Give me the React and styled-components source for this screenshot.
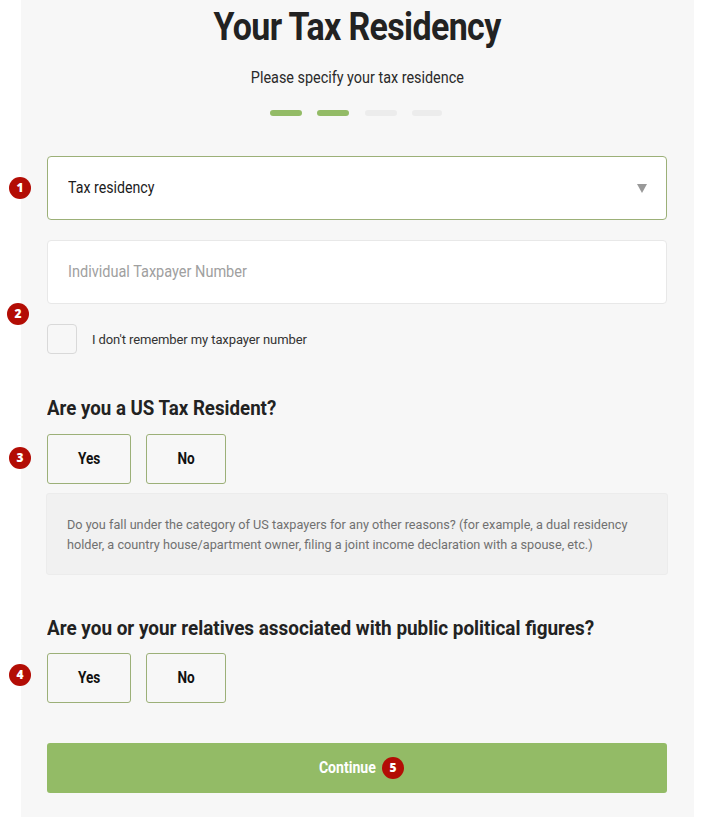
import React from "react";
import styled, { createGlobalStyle } from "styled-components";

const Global = createGlobalStyle`
  html, body {
    margin: 0;
    padding: 0;
    background: #fff;
    font-family: "Roboto", "Liberation Sans", sans-serif;
    color: #222;
  }
`;

const Page = styled.div`
  width: 720px;
  height: 836px;
  position: relative;
  overflow: hidden;
`;

const Panel = styled.div`
  position: relative;
  margin-left: 21px;
  width: 673px;
  height: 817px;
  box-sizing: border-box;
  padding: 0 27px 0 26px;
  background: #f7f7f7;
  display: flex;
  flex-direction: column;
`;

// the reference face is a condensed grotesque, Roboto gets squeezed to match
const Narrow = styled.span`
  display: inline-block;
  transform: scaleX(${(p) => p.$x || 0.9});
  transform-origin: ${(p) => p.$origin || "left"} center;
  white-space: nowrap;
`;

const Title = styled.h1`
  margin: 5px 0 0;
  height: 44px;
  line-height: 44px;
  font-size: 39px;
  font-weight: 700;
  letter-spacing: -0.7px;
  text-align: center;
  color: #222;
`;

const Subtitle = styled.p`
  margin: 19px 0 0;
  height: 20px;
  line-height: 20px;
  font-size: 16px;
  text-align: center;
  color: #2a2a2a;
`;

const Steps = styled.div`
  margin: 22px 3px 0 0;
  display: flex;
  justify-content: center;
`;

const Step = styled.span`
  width: ${(p) => p.$w || 32}px;
  height: 6px;
  margin-left: ${(p) => p.$gap || 0}px;
  border-radius: 3px;
  background: ${(p) => (p.$on ? "#93bb66" : "#ececec")};
`;

const Select = styled.div`
  margin-top: 40px;
  height: 64px;
  box-sizing: border-box;
  padding: 0 20px 2px;
  background: #fff;
  border: 1px solid #9cb078;
  border-radius: 4px;
  display: flex;
  align-items: center;
  justify-content: space-between;
  font-size: 16px;
  color: #1c1c1c;
`;

const Caret = styled.span`
  width: 0;
  height: 0;
  margin: 2px -1px 0 0;
  border-left: 5.5px solid transparent;
  border-right: 5.5px solid transparent;
  border-top: 9px solid #999;
`;

const Input = styled.div`
  margin-top: 20px;
  height: 64px;
  box-sizing: border-box;
  padding: 0 20px 2px;
  background: #fff;
  border: 1px solid #e8e8e8;
  border-radius: 4px;
  display: flex;
  align-items: center;
  font-size: 16px;
  color: #a0a0a0;
`;

const CheckRow = styled.label`
  margin-top: 20px;
  display: flex;
  align-items: center;
  gap: 15px;
  font-size: 13px;
  letter-spacing: -0.1px;
  color: #333;
`;

const Check = styled.span`
  width: 30px;
  height: 30px;
  box-sizing: border-box;
  background: #f7f7f7;
  border: 1px solid #d9d9d9;
  border-radius: 4px;
`;

const Question = styled.h2`
  margin: ${(p) => p.$top}px 0 0;
  height: 26px;
  line-height: 26px;
  font-size: 21px;
  font-weight: 700;
  color: #222;
`;

const Choices = styled.div`
  margin-top: ${(p) => p.$top}px;
  display: flex;
  gap: 15px;
`;

const Choice = styled.button`
  width: ${(p) => p.$w}px;
  height: 50px;
  padding: 0 0 2px;
  box-sizing: border-box;
  background: transparent;
  border: 1px solid #9cb078;
  border-radius: 3px;
  font-family: inherit;
  font-size: 16px;
  font-weight: 700;
  color: #111;
`;

const Note = styled.div`
  margin: 9px -1px 0;
  height: 82px;
  box-sizing: border-box;
  padding: 21px 20px 0;
  background: #f1f1f1;
  border: 1px solid #ececec;
  border-radius: 3px;
  font-size: 12.7px;
  line-height: 20px;
  color: #707070;
  white-space: nowrap;
`;

const Continue = styled.button`
  position: relative;
  margin-top: 40px;
  height: 50px;
  padding: 0 20px 2px 0;
  background: #93bb66;
  border: 0;
  border-radius: 3px;
  font-family: inherit;
  font-size: 16px;
  font-weight: 700;
  color: #fff;
`;

const Badge = styled.span`
  position: absolute;
  left: ${(p) => p.$x - 11}px;
  top: ${(p) => p.$y - 11}px;
  width: 22px;
  height: 22px;
  border-radius: 50%;
  background: #b30d05;
  color: #fff;
  font-family: "Open Sans", sans-serif;
  font-size: 12px;
  font-weight: 800;
  line-height: 22px;
  text-align: center;
`;

export default function App() {
  return (
    <Page>
      <Global />
      <Panel>
        <Title>
          <Narrow $x={0.87} $origin="center">Your Tax Residency</Narrow>
        </Title>
        <Subtitle>
          <Narrow $origin="center">Please specify your tax residence</Narrow>
        </Subtitle>
        <Steps>
          <Step $on />
          <Step $on $gap={15} />
          <Step $gap={16} />
          <Step $w={30} $gap={15} />
        </Steps>
        <Select>
          <Narrow $x={0.887}>Tax residency</Narrow>
          <Caret />
        </Select>
        <Input>
          <Narrow $x={0.907}>Individual Taxpayer Number</Narrow>
        </Input>
        <CheckRow>
          <Check />
          I don't remember my taxpayer number
        </CheckRow>
        <Question $top={41}>
          <Narrow $x={0.89}>Are you a US Tax Resident?</Narrow>
        </Question>
        <Choices $top={13}>
          <Choice $w={84}><Narrow $x={0.85} $origin="center">Yes</Narrow></Choice>
          <Choice $w={80}><Narrow $x={0.85} $origin="center">No</Narrow></Choice>
        </Choices>
        <Note>
          Do you fall under the category of US taxpayers for any other reasons? (for example, a dual residency
          <br />
          holder, a country house/apartment owner, filing a joint income declaration with a spouse, etc.)
        </Note>
        <Question $top={40}>
          <Narrow>Are you or your relatives associated with public political figures?</Narrow>
        </Question>
        <Choices $top={12}>
          <Choice $w={84}><Narrow $x={0.85} $origin="center">Yes</Narrow></Choice>
          <Choice $w={80}><Narrow $x={0.85} $origin="center">No</Narrow></Choice>
        </Choices>
        <Continue>
          <Narrow $x={0.88} $origin="center">Continue</Narrow>
        </Continue>
      </Panel>
      <Badge $x={20} $y={188}>1</Badge>
      <Badge $x={18} $y={314}>2</Badge>
      <Badge $x={20} $y={458}>3</Badge>
      <Badge $x={20} $y={675}>4</Badge>
      <Badge $x={393} $y={768}>5</Badge>
    </Page>
  );
}
